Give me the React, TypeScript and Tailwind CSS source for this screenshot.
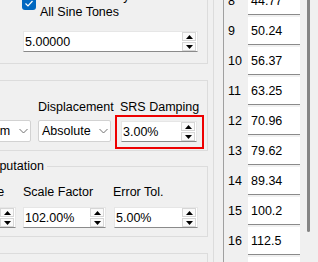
import React from "react";

function Arrow({ up }: { up: boolean }) {
  return (
    <svg width="7" height="4" viewBox="0 0 7 4">
      {up ? <path d="M0 4 L3.5 0 L7 4 Z" fill="#000" /> : <path d="M0 0 L3.5 4 L7 0 Z" fill="#000" />}
    </svg>
  );
}

function Spin({ value, h = 21 }: { value: string; h?: number }) {
  return (
    <div
      className="flex w-full bg-white border border-[#e6e6e6] border-b-[#8a8a8a]"
      style={{ height: h }}
    >
      <div className="flex-1 pl-[1px] flex items-center whitespace-nowrap overflow-hidden">{value}</div>
      <div className="w-[14px] mr-[1px] my-[0px] flex flex-col gap-[1px] py-[0px]">
        <div className="flex-1 border border-[#d6d6d6] bg-[#fafafa] flex items-center justify-center">
          <Arrow up />
        </div>
        <div className="flex-1 border border-[#d6d6d6] bg-[#fafafa] flex items-center justify-center">
          <Arrow up={false} />
        </div>
      </div>
    </div>
  );
}

function Combo({ value }: { value: string }) {
  return (
    <div className="h-[22px] w-full bg-white border border-[#d2d2d2] rounded-[2px] flex items-center pl-[3px] whitespace-nowrap">
      <span>{value}</span>
      <svg className="ml-auto mr-[2px]" width="9" height="6" viewBox="0 0 9 6">
        <path d="M0.5 1 L4.5 5 L8.5 1" fill="none" stroke="#707070" strokeWidth="1" />
      </svg>
    </div>
  );
}

const rows: [string, string][] = [
  ["8", "44.77"],
  ["9", "50.24"],
  ["10", "56.37"],
  ["11", "63.25"],
  ["12", "70.96"],
  ["13", "79.62"],
  ["14", "89.34"],
  ["15", "100.2"],
  ["16", "112.5"],
  ["17", "126.2"],
];

export default function App() {
  return (
    <div className="w-[318px] h-[262px] overflow-hidden bg-[#f0f0f0] flex font-['Liberation_Sans',Arial,sans-serif] text-[12.5px] leading-[16px] text-black">
      {/* left column */}
      <div className="w-[208px] shrink-0 flex flex-col">
        {/* group 1 */}
        <div className="h-[64px] shrink-0 border-r border-b border-[#dcdcdc] flex flex-col">
          <div className="flex items-start pl-[22px] -mt-[12px]">
            <div className="mt-[8px] w-[14px] h-[14px] rounded-[3px] bg-[#0067c0] flex items-center justify-center">
              <svg width="14" height="14" viewBox="0 0 14 14">
                <path d="M3.5 7.5 L6 10 L10.5 5" fill="none" stroke="#fff" strokeWidth="1.2" />
              </svg>
            </div>
            <div className="ml-[4px]">
              Common Decay for
              <br />
              All Sine Tones
            </div>
          </div>
          <div className="ml-[23px] mt-[11px] w-[175px]">
            <Spin value="5.00000" />
          </div>
        </div>

        {/* group 2 */}
        <div className="mt-[16px] h-[71px] shrink-0 border-t border-r border-b border-[#dcdcdc] pt-[18px] flex">
          <div className="-ml-[48px] w-[79px] flex flex-col">
            <div className="whitespace-nowrap">Type</div>
            <div className="mt-[5px]">
              <Combo value="Maximum" />
            </div>
          </div>
          <div className="ml-[7px] w-[73px] flex flex-col">
            <div className="whitespace-nowrap">Displacement</div>
            <div className="mt-[5px]">
              <Combo value="Absolute" />
            </div>
          </div>
          <div className="ml-[10px] w-[76px] flex flex-col">
            <div className="whitespace-nowrap -ml-[1px]">SRS Damping</div>
            <div className="mt-[6px] relative">
              <Spin value="3.00%" />
              <div className="absolute -left-[6px] -top-[6px] -right-[7px] -bottom-[7px] border-2 border-[#ee0000] pointer-events-none" />
            </div>
          </div>
        </div>

        {/* group 3 */}
        <div className="mt-[7px] shrink-0 flex flex-col">
          <div className="flex h-[16px]">
            <span className="-ml-[27px] whitespace-nowrap">Computation</span>
            <div className="flex-1 ml-[3px] mt-[8px] h-[8px] border-t border-r border-[#dcdcdc]" />
          </div>
          <div className="h-[63px] border-r border-b border-[#dcdcdc] pt-[10px] flex">
            <div className="-ml-[68px] w-[84px] flex flex-col">
              <div className="whitespace-nowrap">Sample Rate</div>
              <div className="mt-[7px]">
                <Spin value="10000 Hz" />
              </div>
            </div>
            <div className="ml-[7px] w-[83px] flex flex-col">
              <div className="whitespace-nowrap">Scale Factor</div>
              <div className="mt-[7px]">
                <Spin value="102.00%" />
              </div>
            </div>
            <div className="ml-[8px] w-[84px] flex flex-col">
              <div className="whitespace-nowrap -ml-[1px]">Error Tol.</div>
              <div className="mt-[7px]">
                <Spin value="5.00%" />
              </div>
            </div>
          </div>
        </div>

        {/* group 4 */}
        <div className="mt-[16px] h-[30px] shrink-0 border-t border-r border-[#dcdcdc]" />
      </div>

      {/* right side */}
      <div className="flex-1 flex">
        <div className="w-[5px] shrink-0" />
        <div className="w-px shrink-0 bg-[#dcdcdc]" />
        <div className="w-[9px] shrink-0" />
        <div className="w-px shrink-0 bg-[#a0a0a0]" />
        <div className="flex flex-col -mt-[15px]">
          {rows.map(([n, v]) => (
            <div key={n} className="h-[30px] flex shrink-0">
              <div className="w-[24px] pl-[4px] pt-[2px] flex items-center">{n}</div>
              <div className="mt-[2px] h-[28px] w-[52px] bg-white border-b border-[#8a8a8a] pl-[3px] flex items-center">
                {v}
              </div>
            </div>
          ))}
        </div>
        <div className="w-[7px] shrink-0" />
        <div className="w-[3px] h-[232px] shrink-0 rounded-b-full bg-[#858585]" />
      </div>
    </div>
  );
}
